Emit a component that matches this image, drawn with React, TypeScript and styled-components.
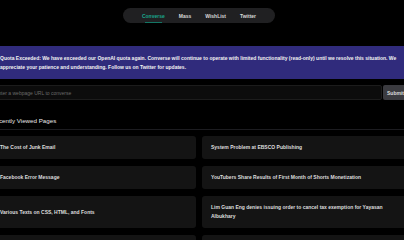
import React from "react";
import styled, { createGlobalStyle } from "styled-components";

const GlobalStyle = createGlobalStyle`
  html, body {
    margin: 0;
    padding: 0;
    background: #000;
    overflow: hidden;
  }
  body {
    font-family: "Liberation Sans", Arial, sans-serif;
    color: #e6e6e6;
  }
`;

const Page = styled.div`
  width: 398px;
  display: flex;
  flex-direction: column;
  align-items: center;
`;

const Nav = styled.nav`
  margin-top: 8px;
  height: 15px;
  padding: 0 19px;
  display: flex;
  align-items: center;
  gap: 14px;
  background: #202022;
  border-radius: 8px;
`;

const NavItem = styled.a<{ $active?: boolean }>`
  position: relative;
  font-size: 5px;
  font-weight: 600;
  line-height: 6px;
  color: ${(p) => (p.$active ? "#19a88c" : "#d8d8d8")};
  text-decoration: none;
  &::after {
    content: "";
    display: ${(p) => (p.$active ? "block" : "none")};
    position: absolute;
    left: 3px;
    right: 3px;
    bottom: -4px;
    height: 1px;
    background: #137564;
  }
`;

const Container = styled.main`
  width: 416px;
  flex-shrink: 0;
  margin-top: 23px;
  display: flex;
  flex-direction: column;
`;

const Banner = styled.div`
  background: #302b7c;
  color: #f2f2f2;
  font-size: 5px;
  font-weight: 600;
  line-height: 9px;
  padding: 8px 9px 7px;
`;

const SearchRow = styled.form`
  margin-top: 6px;
  display: flex;
  gap: 1px;
  height: 15px;
`;

const UrlInput = styled.input`
  flex: 1;
  min-width: 0;
  box-sizing: border-box;
  height: 15px;
  background: #0c0c0c;
  border: 1px solid #1c1c1c;
  border-radius: 2px;
  padding: 0 3px;
  font-family: inherit;
  font-size: 5px;
  color: #ddd;
  outline: none;
  &::placeholder {
    color: #6a6a6a;
  }
`;

const SubmitButton = styled.button`
  box-sizing: border-box;
  height: 15px;
  width: 24px;
  padding: 0 4px;
  border: none;
  border-radius: 2px;
  background: #3b3b40;
  color: #dcdcdc;
  font-family: inherit;
  font-size: 5px;
  font-weight: 600;
  text-align: left;
`;

const Heading = styled.h2`
  margin: 17px 0 0;
  padding-bottom: 4px;
  font-size: 6.2px;
  font-weight: 400;
  line-height: 8px;
  color: #e8e8e8;
  border-bottom: 1px solid #1c1c20;
`;

const Grid = styled.div`
  margin-top: 6px;
  display: grid;
  grid-template-columns: 1fr 1fr;
  column-gap: 6px;
  row-gap: 7px;
`;

const Card = styled.a`
  display: flex;
  align-items: center;
  min-height: 23px;
  box-sizing: border-box;
  padding: 7px 9px;
  background: #141414;
  border-radius: 3px;
  font-size: 5px;
  font-weight: 600;
  line-height: 9px;
  color: #dedede;
  text-decoration: none;
`;

const pages = [
  "The Cost of Junk Email",
  "System Problem at EBSCO Publishing",
  "Facebook Error Message",
  "YouTubers Share Results of First Month of Shorts Monetization",
  "Various Texts on CSS, HTML, and Fonts",
  "Lim Guan Eng denies issuing order to cancel tax exemption for Yayasan Albukhary",
  "How to Write a Good Bug Report",
  "Understanding the JavaScript Event Loop",
];

export default function App() {
  return (
    <>
      <GlobalStyle />
      <Page>
        <Nav>
          <NavItem $active>Converse</NavItem>
          <NavItem>Mass</NavItem>
          <NavItem>WishList</NavItem>
          <NavItem>Twitter</NavItem>
        </Nav>
        <Container>
          <Banner>
            Quota Exceeded: We have exceeded our OpenAI quota again. Converse will continue to operate
            with limited functionality (read-only) until we resolve this situation. We appreciate your
            patience and understanding. Follow us on Twitter for updates.
          </Banner>
          <SearchRow onSubmit={(e) => e.preventDefault()}>
            <UrlInput placeholder="Enter a webpage URL to converse" />
            <SubmitButton type="submit">Submit</SubmitButton>
          </SearchRow>
          <Heading>Recently Viewed Pages</Heading>
          <Grid>
            {pages.map((p) => (
              <Card key={p}>{p}</Card>
            ))}
          </Grid>
        </Container>
      </Page>
    </>
  );
}
